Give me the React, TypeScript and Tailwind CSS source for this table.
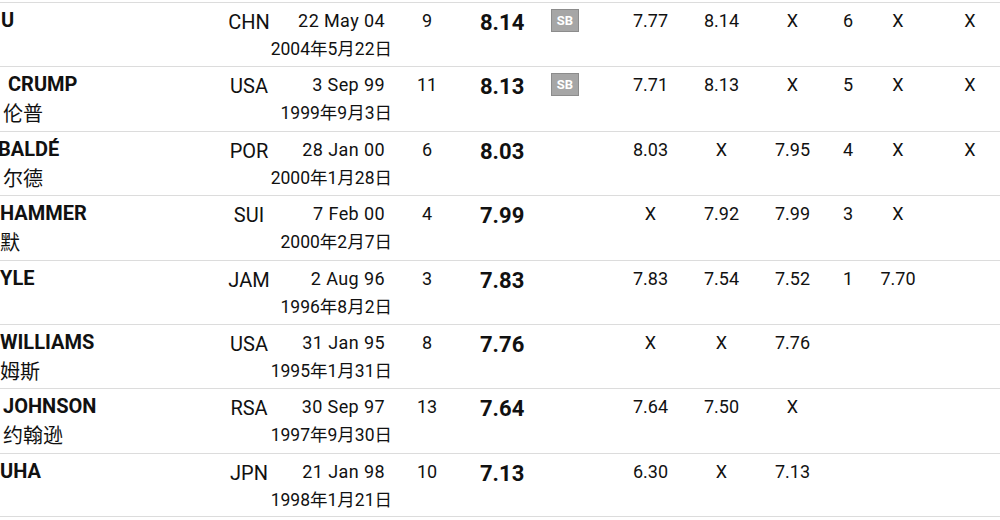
import React from 'react';

type Row = {
  name: string;
  nameCls: string;
  cn: string;
  cnCls: string;
  nat: string;
  date: string;
  cnDate: string;
  order: string;
  mark: string;
  sb: boolean;
  att: string[];
};

const rows: Row[] = [
  { name: 'U', nameCls: 'ml-[1px]', cn: '', cnCls: '', nat: 'CHN', date: '22 May 04', cnDate: '2004年5月22日', order: '9', mark: '8.14', sb: true, att: ['7.77', '8.14', 'X', '6', 'X', 'X'] },
  { name: 'CRUMP', nameCls: 'ml-[8px]', cn: '伦普', cnCls: 'ml-[3px]', nat: 'USA', date: '3 Sep 99', cnDate: '1999年9月3日', order: '11', mark: '8.13', sb: true, att: ['7.71', '8.13', 'X', '5', 'X', 'X'] },
  { name: 'BALDÉ', nameCls: '-ml-[2px]', cn: '尔德', cnCls: 'ml-[3px]', nat: 'POR', date: '28 Jan 00', cnDate: '2000年1月28日', order: '6', mark: '8.03', sb: false, att: ['8.03', 'X', '7.95', '4', 'X', 'X'] },
  { name: 'HAMMER', nameCls: 'ml-0', cn: '默', cnCls: 'ml-0', nat: 'SUI', date: '7 Feb 00', cnDate: '2000年2月7日', order: '4', mark: '7.99', sb: false, att: ['X', '7.92', '7.99', '3', 'X', ''] },
  { name: 'YLE', nameCls: 'ml-0', cn: '', cnCls: '', nat: 'JAM', date: '2 Aug 96', cnDate: '1996年8月2日', order: '3', mark: '7.83', sb: false, att: ['7.83', '7.54', '7.52', '1', '7.70', ''] },
  { name: 'WILLIAMS', nameCls: 'ml-0', cn: '姆斯', cnCls: 'ml-0', nat: 'USA', date: '31 Jan 95', cnDate: '1995年1月31日', order: '8', mark: '7.76', sb: false, att: ['X', 'X', '7.76', '', '', ''] },
  { name: 'JOHNSON', nameCls: 'ml-[3px]', cn: '约翰逊', cnCls: 'ml-[3px]', nat: 'RSA', date: '30 Sep 97', cnDate: '1997年9月30日', order: '13', mark: '7.64', sb: false, att: ['7.64', '7.50', 'X', '', '', ''] },
  { name: 'UHA', nameCls: 'ml-0', cn: '', cnCls: '', nat: 'JPN', date: '21 Jan 98', cnDate: '1998年1月21日', order: '10', mark: '7.13', sb: false, att: ['6.30', 'X', '7.13', '', '', ''] },
];

const attWidths = ['w-[71px]', 'w-[71px]', 'w-[71px]', 'w-[40px]', 'w-[60px]', 'w-[84px]'];

const ResultRow = ({ r, last }: { r: Row; last: boolean }) => (
  <div className={`flex h-[64.4px] border-t border-[#dcdcdc] ${last ? 'border-b' : ''}`}>
    {/* name */}
    <div className="w-[220px] shrink-0 overflow-hidden">
      <div className={`pt-[5px] text-[20px] leading-[24px] font-bold whitespace-nowrap ${r.nameCls}`}>{r.name}</div>
      <div className={`mt-[6px] text-[20px] leading-[24px] whitespace-nowrap ${r.cnCls}`}>{r.cn}</div>
    </div>
    {/* nation */}
    <div className="w-[58px] shrink-0 pt-[7px] text-center text-[20px] leading-[24px]">{r.nat}</div>
    {/* date */}
    <div className="flex w-[114px] shrink-0 flex-col items-end">
      <div className="pt-[6px] pr-[7px] text-[18px] leading-[24px] tracking-[0.4px] whitespace-nowrap">{r.date}</div>
      <div className="mt-[4px] text-[17.5px] leading-[24px] whitespace-nowrap">{r.cnDate}</div>
    </div>
    {/* order */}
    <div className="w-[70px] shrink-0 pt-[6px] text-center text-[18px] leading-[24px]">{r.order}</div>
    {/* mark */}
    <div className="w-[83px] shrink-0 pl-[18px] pt-[8px] text-[22px] leading-[24px] font-bold">{r.mark}</div>
    {/* record badge */}
    <div className="w-[70px] shrink-0 pl-[6px] pt-[6px]">
      {r.sb && (
        <div className="flex h-[23px] w-[28px] items-center justify-center border border-[#8c8c8c] bg-[#a6a6a6] text-[13px] font-bold text-white">
          SB
        </div>
      )}
    </div>
    {/* attempts */}
    {r.att.map((a, i) => (
      <div key={i} className={`${attWidths[i]} shrink-0 pt-[6px] text-center text-[18px] leading-[24px]`}>
        {a}
      </div>
    ))}
  </div>
);

export default function App() {
  return (
    <div
      className="h-[520px] w-[1000px] overflow-hidden bg-white pt-[2px] text-[#111]"
      style={{ fontFamily: 'Roboto, "Noto Sans CJK SC", sans-serif' }}
    >
      {rows.map((r, i) => (
        <ResultRow key={i} r={r} last={i === rows.length - 1} />
      ))}
    </div>
  );
}
